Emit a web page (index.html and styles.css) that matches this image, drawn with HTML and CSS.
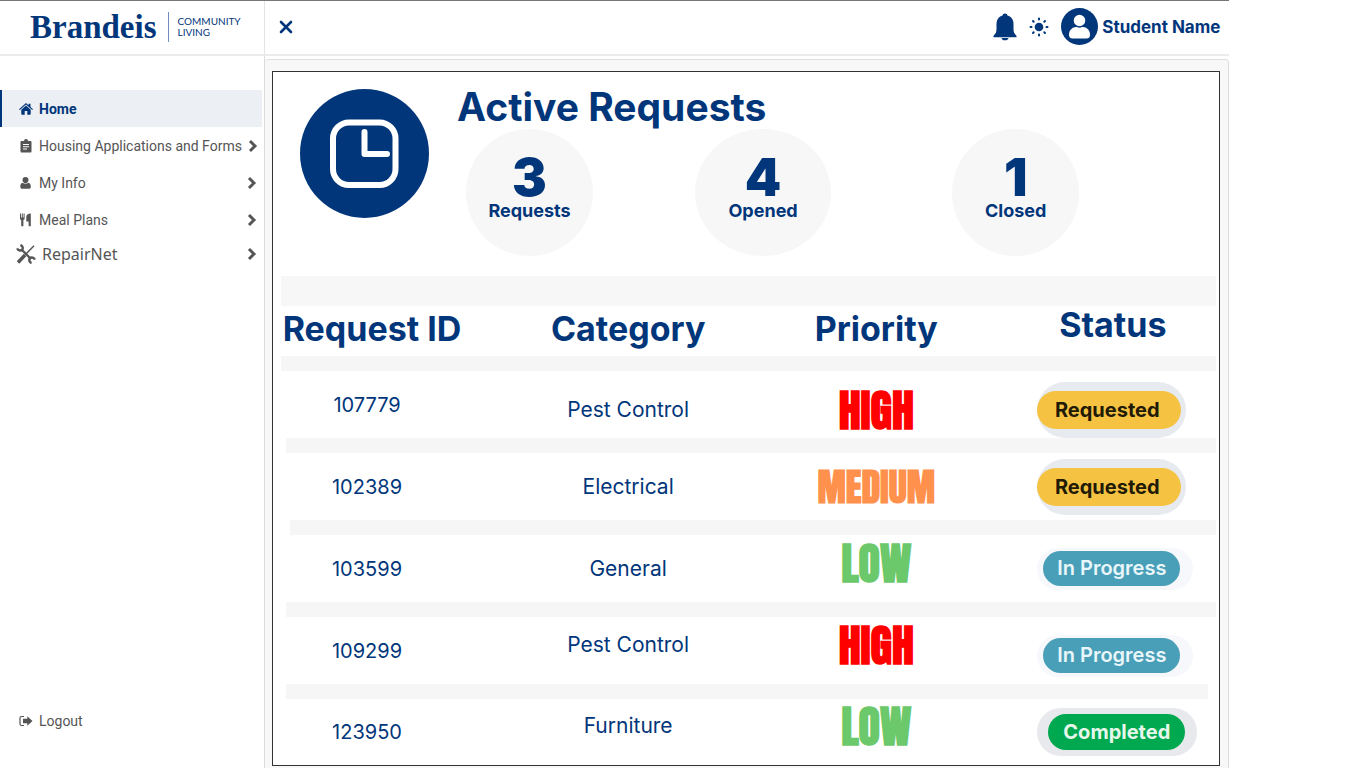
FILE: index.html
```html
<!DOCTYPE html>
<html lang="en">
<head>
<meta charset="utf-8">
<meta name="viewport" content="width=device-width, initial-scale=1">
<title>Brandeis Community Living</title>
<link rel="stylesheet" href="styles.css">
</head>
<body>
<svg class="defs" width="0" height="0" aria-hidden="true">
  <symbol id="chevron" viewBox="0 0 10 14"><path d="M2 2l5 5-5 5" fill="none" stroke="currentColor" stroke-width="3"/></symbol>
</svg>
<div class="app">
  <header class="topbar">
    <a class="brand" href="#">
      <span class="brand-name">Brandeis</span>
      <span class="brand-unit">COMMUNITY<br>LIVING</span>
    </a>
    <div class="tools">
      <button class="icon-button" type="button" aria-label="Close menu">
        <svg width="14" height="14" viewBox="0 0 14 14"><path d="M2 2l10 10M12 2L2 12" stroke="currentColor" stroke-width="2.600" stroke-linecap="round"/></svg>
      </button>
      <div class="account">
        <button class="icon-button" type="button" aria-label="Notifications">
          <svg width="24" height="28" viewBox="0 0 24 28"><path fill="currentColor" d="M9.500 2.500a2.500 2 0 0 1 5 0C18.500 3.500 20.500 7 20.500 11v5c0 3 .8 4.500 2.700 6.500.8 1 .5 1.800-.7 1.800H1.500c-1.200 0-1.500-.8-.7-1.800C2.700 20.500 3.500 19 3.500 16v-5c0-4 2-7.500 6-8.500zM8.500 25h7c-.4 1.500-1.500 2.300-3.500 2.300S8.900 26.500 8.500 25z"/></svg>
        </button>
        <button class="icon-button" type="button" aria-label="Light mode">
          <svg width="20" height="20" viewBox="0 0 20 20"><circle cx="10" cy="10" r="4.300" fill="currentColor"/><path d="M10 1.500v1M10 17.500v1M1.500 10h1M17.500 10h1M4 4l.7.7M15.300 15.300l.7.7M16 4l-.7.7M4.700 15.300L4 16" stroke="currentColor" stroke-width="2" stroke-linecap="round"/></svg>
        </button>
        <a class="user" href="#">
          <svg width="37" height="37" viewBox="0 0 37 37"><circle cx="18.500" cy="18.500" r="18.500" fill="#02367b"/><path fill="#fff" d="M8 27c0-5 3-8.500 10.500-8.500S29 22 29 27c0 2.500-1.500 3.500-3.500 3.500h-14C9.500 30.500 8 29.500 8 27z"/><circle cx="18.500" cy="12.500" r="6.500" fill="#fff" stroke="#02367b" stroke-width="1.400"/></svg>
          <span>Student Name</span>
        </a>
      </div>
    </div>
  </header>

  <nav class="sidebar" aria-label="Main">
    <a class="nav-item current" href="#">
      <svg class="nav-icon" viewBox="0 0 14 14"><path fill="currentColor" d="M7 3.500l4.700 4.200V12c0 .5-.3.800-.8.800H8.300V9H5.700v3.800H3.100c-.5 0-.8-.3-.8-.8V7.700zM7 1l2.500 2.200V1.800h2V5L14 7.200l-.8.900L7 2.600.8 8.100 0 7.200z"/></svg>
      <span>Home</span>
    </a>
    <a class="nav-item" href="#">
      <svg class="nav-icon" viewBox="0 0 14 14"><path fill="currentColor" fill-rule="evenodd" d="M5 2a2 2 0 0 1 4 0h2.500c.5 0 1 .5 1 1v9.500c0 .5-.5 1-1 1h-9c-.5 0-1-.5-1-1V3c0-.5.5-1 1-1zM4 5v1h6V5zm0 2.300v1h6v-1zm0 2.300v1h4v-1z"/></svg>
      <span>Housing Applications and Forms</span>
      <svg class="chevron"><use href="#chevron"/></svg>
    </a>
    <a class="nav-item" href="#">
      <svg class="nav-icon" viewBox="0 0 14 14"><path fill="currentColor" d="M3.500 4a3 3 0 0 1 6 0c0 1.900-1.300 3.200-3 3.200S3.500 5.900 3.500 4zM3.500 6.800c1.800 1.400 4.200 1.400 6 0 1.700.4 2.300 2 2.300 4 0 1.500-.8 2-2 2H3.300c-1.200 0-2-.5-2-2 0-2 .5-3.600 2.200-4z"/></svg>
      <span>My Info</span>
      <svg class="chevron"><use href="#chevron"/></svg>
    </a>
    <a class="nav-item" href="#">
      <svg class="nav-icon" viewBox="0 0 14 14"><path fill="currentColor" d="M1 .5h1v4h.8v-4h1v4h.8v-4h1v4.700c0 1-.5 1.500-1.200 1.800v5.500c0 1.200-2.200 1.200-2.200 0V7C1.500 6.700 1 6.200 1 5.200zM11.800.5v12c0 1.200-2.200 1.200-2.200 0V8.500H7.300V4c0-2 1.500-3.500 4.500-3.500z"/></svg>
      <span>Meal Plans</span>
      <svg class="chevron"><use href="#chevron"/></svg>
    </a>
    <a class="nav-item repair" href="#">
      <svg class="nav-icon" viewBox="0 0 20 20"><g fill="none" stroke="currentColor"><path d="M5.500 5.500l9.500 9.500" stroke-width="2.200"/><path d="M1.200 4.300a3.200 3.200 0 0 0 5 1.500 3.200 3.200 0 0 0-1.800-4.800M18.800 15.700a3.200 3.200 0 0 0-5-1.500 3.200 3.200 0 0 0 1.800 4.800" stroke-width="2.400"/><path d="M18 1.800L9 11" stroke-width="1.500"/><path d="M9 11l-7 7.500" stroke-width="3.400"/></g></svg>
      <span>RepairNet</span>
      <svg class="chevron"><use href="#chevron"/></svg>
    </a>
    <a class="nav-item logout" href="#">
      <svg class="nav-icon" viewBox="0 0 14 14"><path d="M5 2.500H2.500C1.500 2.500 1 3 1 4v6c0 1 .5 1.500 1.500 1.500H5" fill="none" stroke="currentColor" stroke-width="1.200"/><path fill="currentColor" d="M8.300 2.300L13.500 7l-5.200 4.700V9.200H4V4.800h4.300z"/></svg>
      <span>Logout</span>
    </a>
  </nav>

  <main class="content">
    <div class="card">
      <section class="summary">
        <svg class="clock" viewBox="0 0 129 129" aria-hidden="true"><circle cx="64.500" cy="64.500" r="64.500" fill="#02367b"/><rect x="33" y="33.500" width="62.500" height="62.500" rx="16" fill="none" stroke="#fff" stroke-width="6"/><path d="M64.500 43v22H87" fill="none" stroke="#fff" stroke-width="6" stroke-linecap="round" stroke-linejoin="round"/></svg>
        <div class="summary-body">
          <h1>Active Requests</h1>
          <div class="stats">
            <div class="stat"><strong>3</strong><span>Requests</span></div>
            <div class="stat wide"><strong>4</strong><span>Opened</span></div>
            <div class="stat"><strong>1</strong><span>Closed</span></div>
          </div>
        </div>
      </section>

      <table class="requests">
        <thead>
          <tr><th scope="col">Request ID</th><th scope="col">Category</th><th scope="col">Priority</th><th scope="col" class="raised">Status</th></tr>
        </thead>
        <tbody>
          <tr class="inset">
            <td>107779</td><td class="lowered">Pest Control</td>
            <td class="priority high lowered">HIGH</td>
            <td class="lowered"><span class="badge requested"><span>Requested</span></span></td>
          </tr>
          <tr class="inset-more">
            <td>102389</td><td>Electrical</td>
            <td class="priority medium">MEDIUM</td>
            <td><span class="badge requested"><span>Requested</span></span></td>
          </tr>
          <tr class="inset">
            <td>103599</td><td>General</td>
            <td class="priority low raised">LOW</td>
            <td><span class="badge progress"><span>In Progress</span></span></td>
          </tr>
          <tr class="inset short">
            <td>109299</td><td class="raised">Pest Control</td>
            <td class="priority high raised">HIGH</td>
            <td class="lowered"><span class="badge progress"><span>In Progress</span></span></td>
          </tr>
          <tr>
            <td>123950</td><td class="raised">Furniture</td>
            <td class="priority low raised">LOW</td>
            <td><span class="badge completed"><span>Completed</span></span></td>
          </tr>
        </tbody>
      </table>
    </div>
  </main>
</div>
</body>
</html>
```
FILE: styles.css
```css
* { box-sizing: border-box; }

body {
  margin: 0;
  background: #fff;
  color: #02367b;
  font-family: Inter, "Open Sans", sans-serif;
}

a { color: inherit; text-decoration: none; }
svg { display: block; flex: none; }
.defs { position: absolute; }

.app {
  width: 90%;
  min-height: 100vh;
  display: grid;
  grid-template-columns: 265px 1fr;
  grid-template-rows: auto 1fr;
  border-top: 1px solid #777;
}

/* Header */
.topbar {
  grid-column: 1 / -1;
  display: grid;
  grid-template-columns: subgrid;
  height: 55px;
  border-bottom: 2px solid #ebebeb;
}

.brand {
  display: flex;
  align-items: center;
  gap: 11px;
  padding: 0 0 2px 30px;
  border-right: 1px solid #e4e4e4;
}

.brand-name {
  font: bold 33px/40px "Liberation Serif", serif;
}

.brand-unit {
  padding: 4px 0 4px 9px;
  border-left: 1px solid #6f8fbe;
  font: 10px/11px Lato, sans-serif;
}

.tools {
  display: flex;
  align-items: center;
  justify-content: space-between;
  padding: 0 9px 2px 14px;
}

.account { display: flex; align-items: center; gap: 12px; }

.icon-button {
  padding: 0;
  border: 0;
  background: none;
  color: inherit;
  cursor: pointer;
}

.user {
  display: flex;
  align-items: center;
  gap: 4px;
  font-size: 17px;
  font-weight: 700;
}

/* Sidebar */
.sidebar {
  display: flex;
  flex-direction: column;
  padding: 34px 2px 28px 0;
  border-right: 1px solid #dcdcdc;
  color: #555;
  font: 14px/20px Roboto, sans-serif;
  white-space: nowrap;
}

.nav-item {
  display: flex;
  align-items: center;
  gap: 6px;
  min-height: 37px;
  padding: 0 5px 0 17px;
  border-left: 2px solid transparent;
}

.nav-item.current {
  border-color: #02367b;
  background: #eceff4;
  color: #02367b;
  font-weight: 700;
}

.nav-icon { width: 14px; height: 14px; }

.chevron { width: 10px; height: 14px; margin-left: auto; }

.nav-item.repair {
  min-height: 32px;
  padding-left: 14px;
  font: 16px/20px "Noto Sans", sans-serif;
}

.repair .nav-icon { width: 20px; height: 20px; }

.nav-item.logout { min-height: 40px; margin-top: auto; }

/* Content */
.content {
  margin-top: 3px;
  padding: 11px 8px 3px 7px;
  border: solid #ddd;
  border-width: 1px 1px 0 0;
  border-radius: 4px 4px 0 0;
  background: #f8f8f8;
}

.card {
  padding: 0 3px 0 8px;
  border: 1px solid #333;
  background: #fff;
}

.summary {
  display: flex;
  gap: 28px;
  padding: 12px 0 20px 19px;
}

.clock { width: 129px; height: 129px; margin-top: 5px; }
.summary-body { flex: 1; }

h1 {
  margin: 0;
  font-size: 39px;
  line-height: 45px;
  font-weight: 700;
}

.stats {
  display: grid;
  grid-template-columns: 229fr 257fr 264fr;
  padding-left: 9px;
}

.stat {
  width: 127px;
  height: 127px;
  padding-top: 27px;
  border-radius: 50%;
  background: #f7f7f7;
  text-align: center;
}

.stat.wide { width: 136px; }

.stat strong {
  display: block;
  font-size: 52px;
  line-height: 44px;
  font-weight: 900;
}

.stat span {
  display: block;
  font-size: 18px;
  line-height: 22px;
  font-weight: 700;
}

/* Requests table */
.requests, .requests thead, .requests tbody { display: block; }
.requests thead { border-top: 30px solid #f7f7f7; }

.requests tr {
  display: grid;
  grid-template-columns: 182fr 330fr 166fr 257fr;
  grid-template-rows: 67px auto;
}

.requests thead tr { grid-template-rows: 50px auto; }

.requests tr::after {
  content: "";
  grid-column: 1 / -1;
  height: 15px;
  background: #f6f6f6;
}

.requests tr.inset::after { margin-left: 5px; }
.requests tr.inset-more::after { margin-left: 9px; }
.requests tr.short::after { margin-right: 8px; }
.requests tbody tr:last-child { grid-template-rows: 66px; }
.requests tbody tr:last-child::after { display: none; }

.requests th, .requests td {
  display: flex;
  align-items: center;
  justify-content: center;
  padding: 0;
  white-space: nowrap;
}

.requests th { font-size: 34px; line-height: 40px; padding-bottom: 4px; }
.requests td { font-size: 21px; line-height: 24px; }
.requests td:first-child { padding-right: 10px; font-size: 20px; }

.requests td:last-child { justify-content: flex-start; padding-left: 78px; }
.requests th:last-child { padding-left: 50px; }

.requests .raised { padding-bottom: 12px; }
.requests .lowered { padding-top: 10px; }

.requests .priority {
  font-family: Impact, Anton, "Liberation Sans Narrow", "Liberation Sans", sans-serif;
  font-size: 44px;
  line-height: 44px;
  font-weight: 700;
}

.requests .medium { font-size: 38px; color: #ff914d; }
.high { color: #f00; }
.low { color: #6bc86b; }

.badge {
  display: block;
  border-radius: 28px;
  font-size: 20px;
  font-weight: 700;
}

.badge span {
  display: block;
  border-radius: 20px;
  text-align: center;
}

.requested { padding: 9px 5px 9px 0; background: #e7eaee; }
.requested span { width: 144px; padding-right: 4px; line-height: 38px; background: #f5c242; color: #211a05; }

.progress { padding: 3px 13px 4px 6px; background: #f6f8fb; }
.progress span { width: 137px; line-height: 35px; background: #4a9fb8; color: #e9f6fa; font-weight: 600; }

.completed { padding: 6px 12px 6px 11px; background: #e8e9ec; }
.completed span { width: 137px; line-height: 36px; background: #00a84f; color: #e4f7ea; }
```
